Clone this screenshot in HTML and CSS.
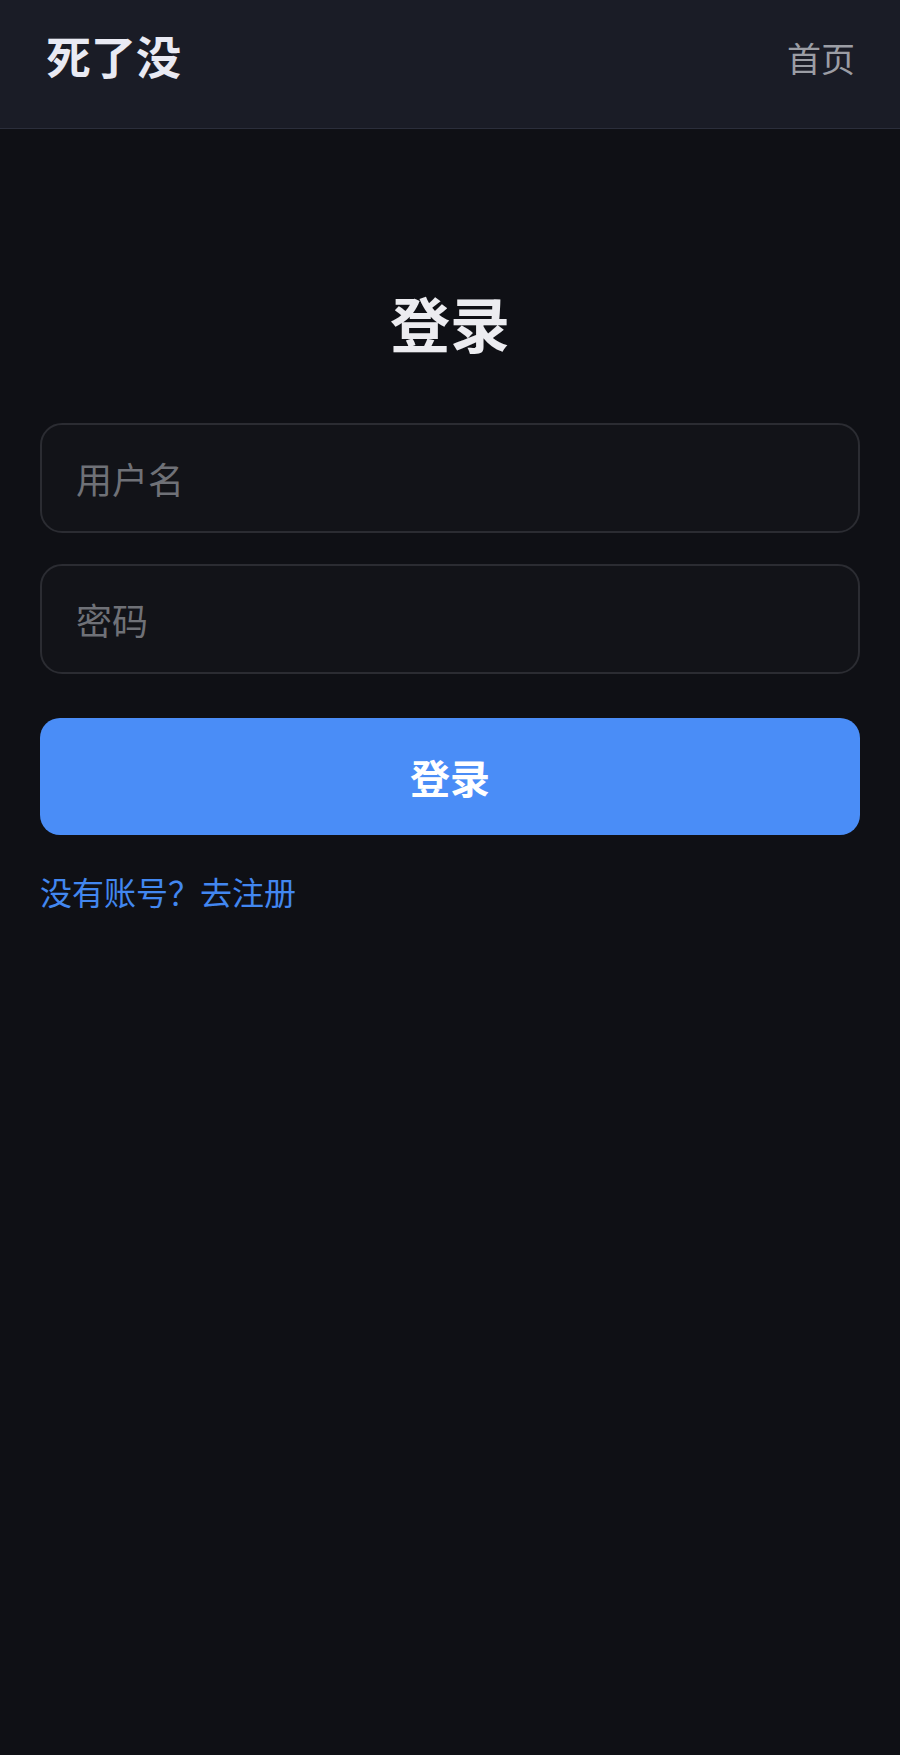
FILE: index.html
```html
<!DOCTYPE html>
<html lang="zh-CN">
<head>
<meta charset="utf-8">
<title>登录 - 死了没</title>
<link rel="stylesheet" href="styles.css">
</head>
<body>
<header class="topbar">
  <a class="logo" href="#">死了没</a>
  <nav class="nav"><a class="nav-link" href="#">首页</a></nav>
</header>
<main class="auth">
  <h1 class="auth-title">登录</h1>
  <form class="auth-form">
    <input class="field" type="text" placeholder="用户名">
    <input class="field" type="password" placeholder="密码">
    <button class="submit" type="button">登录</button>
  </form>
  <a class="switch-link" href="#">没有账号？去注册</a>
</main>
</body>
</html>
```

FILE: styles.css
```css
* { box-sizing: border-box; }

html, body {
  margin: 0;
  padding: 0;
  background: #0f1015;
  font-family: "Noto Sans CJK SC", "Noto Sans", sans-serif;
}

body {
  min-height: 1755px;
}

.topbar {
  height: 129px;
  padding: 0 45px 17px 46px;
  display: flex;
  align-items: center;
  justify-content: space-between;
  background: #1a1c26;
  border-bottom: 1px solid #2b2e3b;
}

.logo {
  font-size: 45px;
  font-weight: 700;
  line-height: 1.2;
  color: #e9eaf3;
  text-decoration: none;
}

.nav {
  margin-top: 5px;
}

.nav-link {
  font-size: 34px;
  line-height: 1.2;
  color: #9b9da4;
  text-decoration: none;
}

.auth {
  padding: 157px 40px 0;
}

.auth-title {
  margin: 0 0 65px;
  font-size: 60px;
  line-height: 1.2;
  font-weight: 700;
  text-align: center;
  color: #ececf0;
}

.auth-form {
  display: flex;
  flex-direction: column;
}

.field {
  height: 110px;
  margin: 0 0 31px;
  padding: 0 34px;
  border: 2px solid #2b2c32;
  border-radius: 22px;
  background: #121318;
  font-family: inherit;
  font-size: 36px;
  color: #e6e6ea;
  outline: none;
}

.field::placeholder {
  color: #6f7177;
}

.field + .field {
  margin-bottom: 44px;
}

.submit {
  height: 117px;
  border: none;
  border-radius: 20px;
  background: #4a8df7;
  font-family: inherit;
  font-size: 40px;
  font-weight: 700;
  color: #ffffff;
  cursor: pointer;
}

.switch-link {
  display: inline-block;
  margin-top: 32px;
  font-size: 32px;
  line-height: 1.5;
  color: #4287f0;
  text-decoration: none;
}
```
